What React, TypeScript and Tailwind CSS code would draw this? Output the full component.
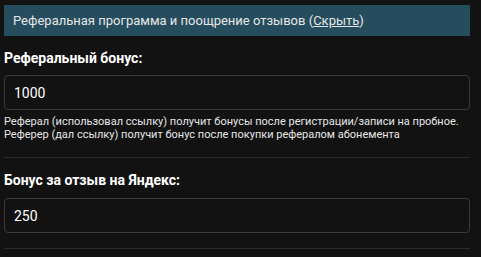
export default function App() {
  return (
    <div className="min-h-screen w-[481px] bg-[#121212] px-1 pt-[5px] font-['Roboto',sans-serif] text-[#e6e6e6]">
      <div className="w-[466px]">
        <div className="flex h-[31px] items-center bg-[#254d5e] pl-[9px] text-[13px]">
          <span>
            Реферальная программа и поощрение отзывов (
            <a href="#" className="underline">Скрыть</a>)
          </span>
        </div>

        <section className="border-b border-[#2b2b2b] pb-4 pt-3">
          <label className="block text-[14px] font-bold leading-5 text-white">Реферальный бонус:</label>
          <input
            defaultValue="1000"
            className="mt-[7px] block h-[35px] w-full rounded border border-[#3a3a3a] bg-[#121212] px-[9px] text-[14px] text-white outline-none"
          />
          <p className="mt-[6px] text-[11px] leading-[12.7px] text-[#e6e6e6]">
            Реферал (использовал ссылку) получит бонусы после регистрации/записи на пробное.
            <br />
            Реферер (дал ссылку) получит бонус после покупки рефералом абонемента
          </p>
        </section>

        <section className="border-b border-[#2b2b2b] pb-[15px] pt-3">
          <label className="block text-[14px] font-bold leading-5 text-white">Бонус за отзыв на Яндекс:</label>
          <input
            defaultValue="250"
            className="mt-2 block h-[35px] w-full rounded border border-[#3a3a3a] bg-[#121212] px-[9px] text-[14px] text-white outline-none"
          />
        </section>
      </div>
    </div>
  );
}
